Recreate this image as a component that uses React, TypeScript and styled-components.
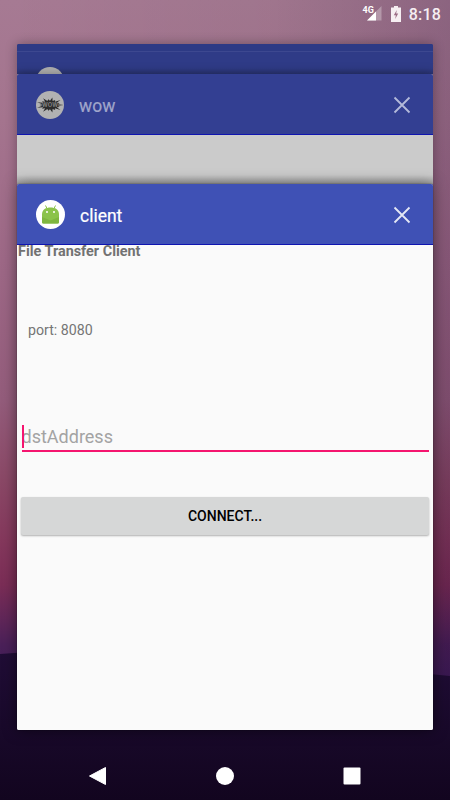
import React from "react";
import styled, { createGlobalStyle } from "styled-components";

const Global = createGlobalStyle`
  html, body { margin: 0; padding: 0; background: #12051f; }
  * { box-sizing: border-box; }
`;

const Screen = styled.div`
  position: relative;
  width: 450px;
  height: 800px;
  overflow: hidden;
  display: flex;
  flex-direction: column;
  font-family: Roboto, "Liberation Sans", sans-serif;
  background:
    linear-gradient(90deg, rgba(0,0,0,0), rgba(0,0,0,.04) 60%, rgba(20,0,40,.18)),
    linear-gradient(180deg, #a67a93 0, #a4748e 120px, #9d6886 260px, #935c7b 400px, #8a4866 480px, #84385c 540px, #7a2d56 585px, #5f2658 620px, #4a2058 645px, #3f1c58 680px);
`;

const Hills = styled.svg`
  position: absolute;
  left: 0;
  top: 640px;
  width: 450px;
  height: 160px;
`;

const StatusBar = styled.div`
  position: relative;
  height: 24px;
  flex: none;
  display: flex;
  align-items: center;
  justify-content: flex-end;
  padding: 4px 9px 0 0;
  color: #f6eef2;
`;

const Clock = styled.span`
  font-size: 16px;
  font-weight: 500;
  margin-left: 8px;
  letter-spacing: .2px;
`;

const Stack = styled.div`
  position: relative;
  flex: none;
  margin: 20px 17.5px 0 17px;
  display: flex;
  flex-direction: column;
`;

const Card = styled.section<{ $h: number; $bg: string }>`
  position: relative;
  height: ${(p) => p.$h}px;
  background: ${(p) => p.$bg};
  border-radius: 2px 2px 0 0;
  box-shadow: 0 0 12px rgba(0, 0, 0, 0.32);
  overflow: hidden;
`;

const LastCard = styled(Card)`
  border-radius: 2px;
  box-shadow: 0 0 14px rgba(0, 0, 0, 0.5), 0 0 1px rgba(0,0,0,.9);
`;

const BackStrip = styled.div`
  height: 8px;
  background: #2d3a85;
  border-bottom: 1px solid #3d4890;
`;

const BackBody = styled.div`
  height: 22px;
  padding: 15px 0 0 19px;
  background: linear-gradient(180deg, #2f3b87 0, #2f3b87 16px, #2a3474 22px);
`;

const Header = styled.header<{ $bg: string }>`
  height: 61px;
  display: flex;
  align-items: center;
  padding: 1px 22px 0 19px;
  background: ${(p) => p.$bg};
  border-bottom: 1px solid #0f14b0;
`;

const Title = styled.h2<{ $c: string }>`
  margin: 2px 0 0 15px;
  flex: 1;
  font-size: 17.5px;
  font-weight: 400;
  -webkit-text-stroke: 0.2px ${(p) => p.$c};
  color: ${(p) => p.$c};
`;

const Gray = styled.div`
  height: 49px;
  background: linear-gradient(180deg, #cbcbcb 0, #cbcbcb 40px, #a8a8a8 49px);
`;

const Content = styled.div`
  background: #fafafa;
  height: 485px;
  display: flex;
  flex-direction: column;
`;

const Heading = styled.div`
  padding-left: 1px;
  font-size: 14.4px;
  font-weight: 700;
  line-height: 13px;
  color: #727272;
`;

const Port = styled.div`
  margin: 64px 0 0 11px;
  font-size: 14.2px;
  line-height: 16px;
  color: #757575;
`;

const Field = styled.div`
  position: relative;
  margin: 83px 4px 0 4.5px;
  height: 31px;
  padding: 4px 0 0 0;
  border-bottom: 2px solid #f5156f;
  font-size: 18px;
  line-height: 24.5px;
  color: #a3a3a3;
`;

const Caret = styled.i`
  position: absolute;
  left: 0.5px;
  top: 4px;
  width: 1.5px;
  height: 23px;
  background: #f5156f;
`;

const Connect = styled.button`
  display: block;
  margin: 45px 3.5px 0 4px;
  height: 38px;
  border: 0;
  border-radius: 2px;
  background: #d6d7d7;
  box-shadow: 0 1px 2px rgba(0, 0, 0, 0.3);
  font-family: inherit;
  font-size: 14px;
  font-weight: 500;
  color: #000;
`;

const NavBar = styled.nav`
  position: relative;
  margin-top: 22px;
  height: 48px;
  flex: none;
  display: flex;
  justify-content: center;
  align-items: center;
  gap: 103px;
`;

const Close = ({ c }: { c: string }) => (
  <svg width="18" height="18" viewBox="0 0 18 18" fill="none" stroke={c} strokeWidth="1.8">
    <path d="M1.5 1.5 16.5 16.5M16.5 1.5 1.5 16.5" />
  </svg>
);

const BackIcon = () => (
  <svg width="28" height="28" viewBox="0 0 28 28">
    <circle cx="14" cy="14" r="14" fill="#b2b2b2" />
  </svg>
);

const WowIcon = () => {
  const pts: string[] = [];
  const n = 36;
  for (let i = 0; i < n; i++) {
    const a = (i / n) * Math.PI * 2;
    const r = i % 2 ? 7 : i % 4 ? 9.5 : 12.5;
    pts.push(`${(14 + Math.cos(a) * r * 1.1).toFixed(1)},${(14 + Math.sin(a) * r * 0.62).toFixed(1)}`);
  }
  return (
    <svg width="28" height="28" viewBox="0 0 28 28">
      <circle cx="14" cy="14" r="14" fill="#b2b2b2" />
      <polygon points={pts.join(" ")} fill="#2c2c2c" />
      <text x="14" y="16.2" textAnchor="middle" fontSize="6.5" fontWeight="700" fill="#7d7d7d" fontFamily="Roboto, sans-serif">WOW</text>
    </svg>
  );
};

const AndroidIcon = () => (
  <svg width="29" height="29" viewBox="0 0 29 29">
    <circle cx="14.5" cy="14.5" r="14.5" fill="#fff" />
    <path d="M9.5 5.5 11 8.5M19.5 5.5 18 8.5" stroke="#8bc34a" strokeWidth="1" />
    <path d="M6 14.5C6 9.5 10 7.6 14.5 7.6S23 9.5 23 14.5V22a1.5 1.5 0 0 1-1.5 1.5H7.5A1.5 1.5 0 0 1 6 22Z" fill="#8bc34a" />
    <path d="M6 17 14.5 20.5 23 17V22a1.5 1.5 0 0 1-1.5 1.5H7.5A1.5 1.5 0 0 1 6 22Z" fill="#7fb63f" />
    <circle cx="11" cy="12" r="1" fill="#fff" />
    <circle cx="18" cy="12" r="1" fill="#fff" />
  </svg>
);

const Signal = () => (
  <svg width="30" height="16" viewBox="0 0 30 16">
    <path d="M15 14.5 29.5 0V14.5Z" fill="#fff" fillOpacity=".3" />
    <path d="M15 14.5 24 5.5V14.5Z" fill="#fff" />
    <text x="10.5" y="7" fontSize="9" fontWeight="700" fill="#fff" fontFamily="Roboto, sans-serif">4G</text>
  </svg>
);

const Battery = () => (
  <svg width="10" height="16" viewBox="0 0 10 16" style={{ marginLeft: 9 }}>
    <path d="M3 0H7V1.5H10V16H0V1.5H3Z" fill="#f6eef2" />
    <path d="M5.8 4 2.8 9.2H4.8L4.2 13 7.2 7.6H5.2Z" fill="#9c6c86" />
  </svg>
);

export default function App() {
  return (
    <Screen>
      <Global />
      <Hills viewBox="0 0 450 160">
        <defs>
          <linearGradient id="h" x1="0" y1="0" x2="0" y2="1">
            <stop offset="0" stopColor="#200d36" />
            <stop offset="1" stopColor="#12051f" />
          </linearGradient>
        </defs>
        <path d="M0 14C60 10 140 8 220 12S380 30 450 36V160H0Z" fill="url(#h)" />
      </Hills>
      <StatusBar>
        <Signal />
        <Battery />
        <Clock>8:18</Clock>
      </StatusBar>
      <Stack>
        <Card $h={30} $bg="#2f3b87">
          <BackStrip />
          <BackBody><BackIcon /></BackBody>
        </Card>
        <Card $h={110} $bg="#cbcbcb">
          <Header $bg="#333f92">
            <WowIcon />
            <Title $c="#a0a6cb">wow</Title>
            <Close c="#b4bada" />
          </Header>
          <Gray />
        </Card>
        <LastCard $h={546} $bg="#fafafa">
          <Header $bg="#3f51b5">
            <AndroidIcon />
            <Title $c="#fff">client</Title>
            <Close c="#e4e7f5" />
          </Header>
          <Content>
            <Heading>File Transfer Client</Heading>
            <Port>port: 8080</Port>
            <Field>
              <Caret />
              dstAddress
            </Field>
            <Connect>CONNECT...</Connect>
          </Content>
        </LastCard>
      </Stack>
      <NavBar>
        <svg width="24" height="24" viewBox="0 0 24 24"><path d="M3.5 12 19.5 3.5V20.5Z" fill="#fff" stroke="#fff" strokeLinejoin="round" /></svg>
        <svg width="24" height="24" viewBox="0 0 24 24"><circle cx="12" cy="12" r="9" fill="#fff" /></svg>
        <svg width="24" height="24" viewBox="0 0 24 24"><rect x="3.5" y="3.5" width="17" height="17" rx="1" fill="#fff" /></svg>
      </NavBar>
    </Screen>
  );
}
